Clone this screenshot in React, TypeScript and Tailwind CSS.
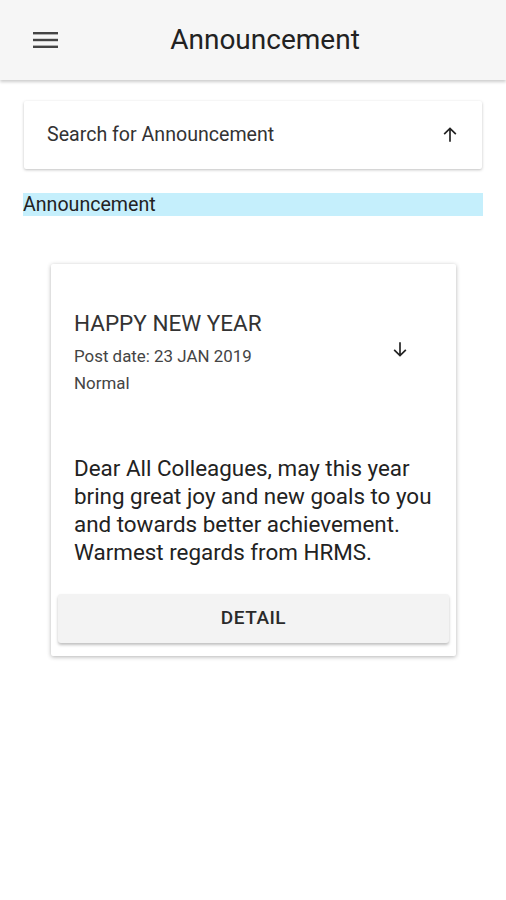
import React from "react";

export default function App() {
  return (
    <div className="w-[506px] h-[900px] bg-white" style={{ fontFamily: "Roboto, 'Noto Sans', sans-serif" }}>
      <header className="h-[80px] bg-[#f6f6f6] flex items-center relative shadow-[0_2px_3px_rgba(0,0,0,0.2)] z-10">
        <div className="pl-[33px] w-[90px]">
          <svg width="26" height="18" viewBox="0 0 26 18">
            <rect x="0" y="1" width="25" height="2.4" fill="#444" />
            <rect x="0" y="7.8" width="25" height="2.4" fill="#444" />
            <rect x="0" y="14.6" width="25" height="2.4" fill="#444" />
          </svg>
        </div>
        <div className="absolute left-0 right-0 text-center text-[28px] text-[#222] pl-[24px] pointer-events-none">
          Announcement
        </div>
      </header>

      <div className="px-[24px] pt-[21px]">
        <div className="h-[68px] bg-white flex items-center justify-between pl-[23px] pr-[22px] shadow-[0_1px_3px_rgba(0,0,0,0.25)] rounded-[2px]">
          <span className="text-[19.6px] text-[#333]">Search for Announcement</span>
          <svg width="20" height="20" viewBox="0 0 24 24">
            <path d="M12 20V4M5 11l7-7 7 7" stroke="#222" strokeWidth="2" fill="none" />
          </svg>
        </div>
      </div>

      <div className="mx-[23px] mt-[24px] h-[23px] bg-[#c5effc] flex items-center text-[19.6px] text-[#222] leading-none">
        Announcement
      </div>

      <div className="mx-[51px] mt-[48px] w-[405px] bg-white shadow-[0_1px_4px_rgba(0,0,0,0.3)] rounded-[2px] pb-[13px]">
        <div className="flex items-center justify-between pl-[23px] pr-[46px] pt-[45px]">
          <div>
            <div className="text-[22.5px] text-[#333] leading-[28px]">HAPPY NEW YEAR</div>
            <div className="text-[16.9px] text-[#444] mt-[7px] leading-[24px]">Post date: 23 JAN 2019</div>
            <div className="text-[16.9px] text-[#444] mt-[3px] leading-[24px]">Normal</div>
          </div>
          <svg width="20" height="20" viewBox="0 0 24 24" className="mt-[-6px]">
            <path d="M12 4v16M5 13l7 7 7-7" stroke="#222" strokeWidth="2" fill="none" />
          </svg>
        </div>
        <div className="pl-[23px] pr-[20px] mt-[59px] text-[22.4px] leading-[28px] text-[#222]">
          Dear All Colleagues, may this year bring great joy and new goals to you and towards better achievement. Warmest regards from HRMS.
        </div>
        <div className="mx-[7px] mt-[28px] h-[49px] bg-[#f3f3f3] rounded-[3px] shadow-[0_2px_3px_rgba(0,0,0,0.25)] flex items-center justify-center text-[19px] font-medium text-[#2a2a2a] tracking-[0.5px]">
          DETAIL
        </div>
      </div>
    </div>
  );
}
